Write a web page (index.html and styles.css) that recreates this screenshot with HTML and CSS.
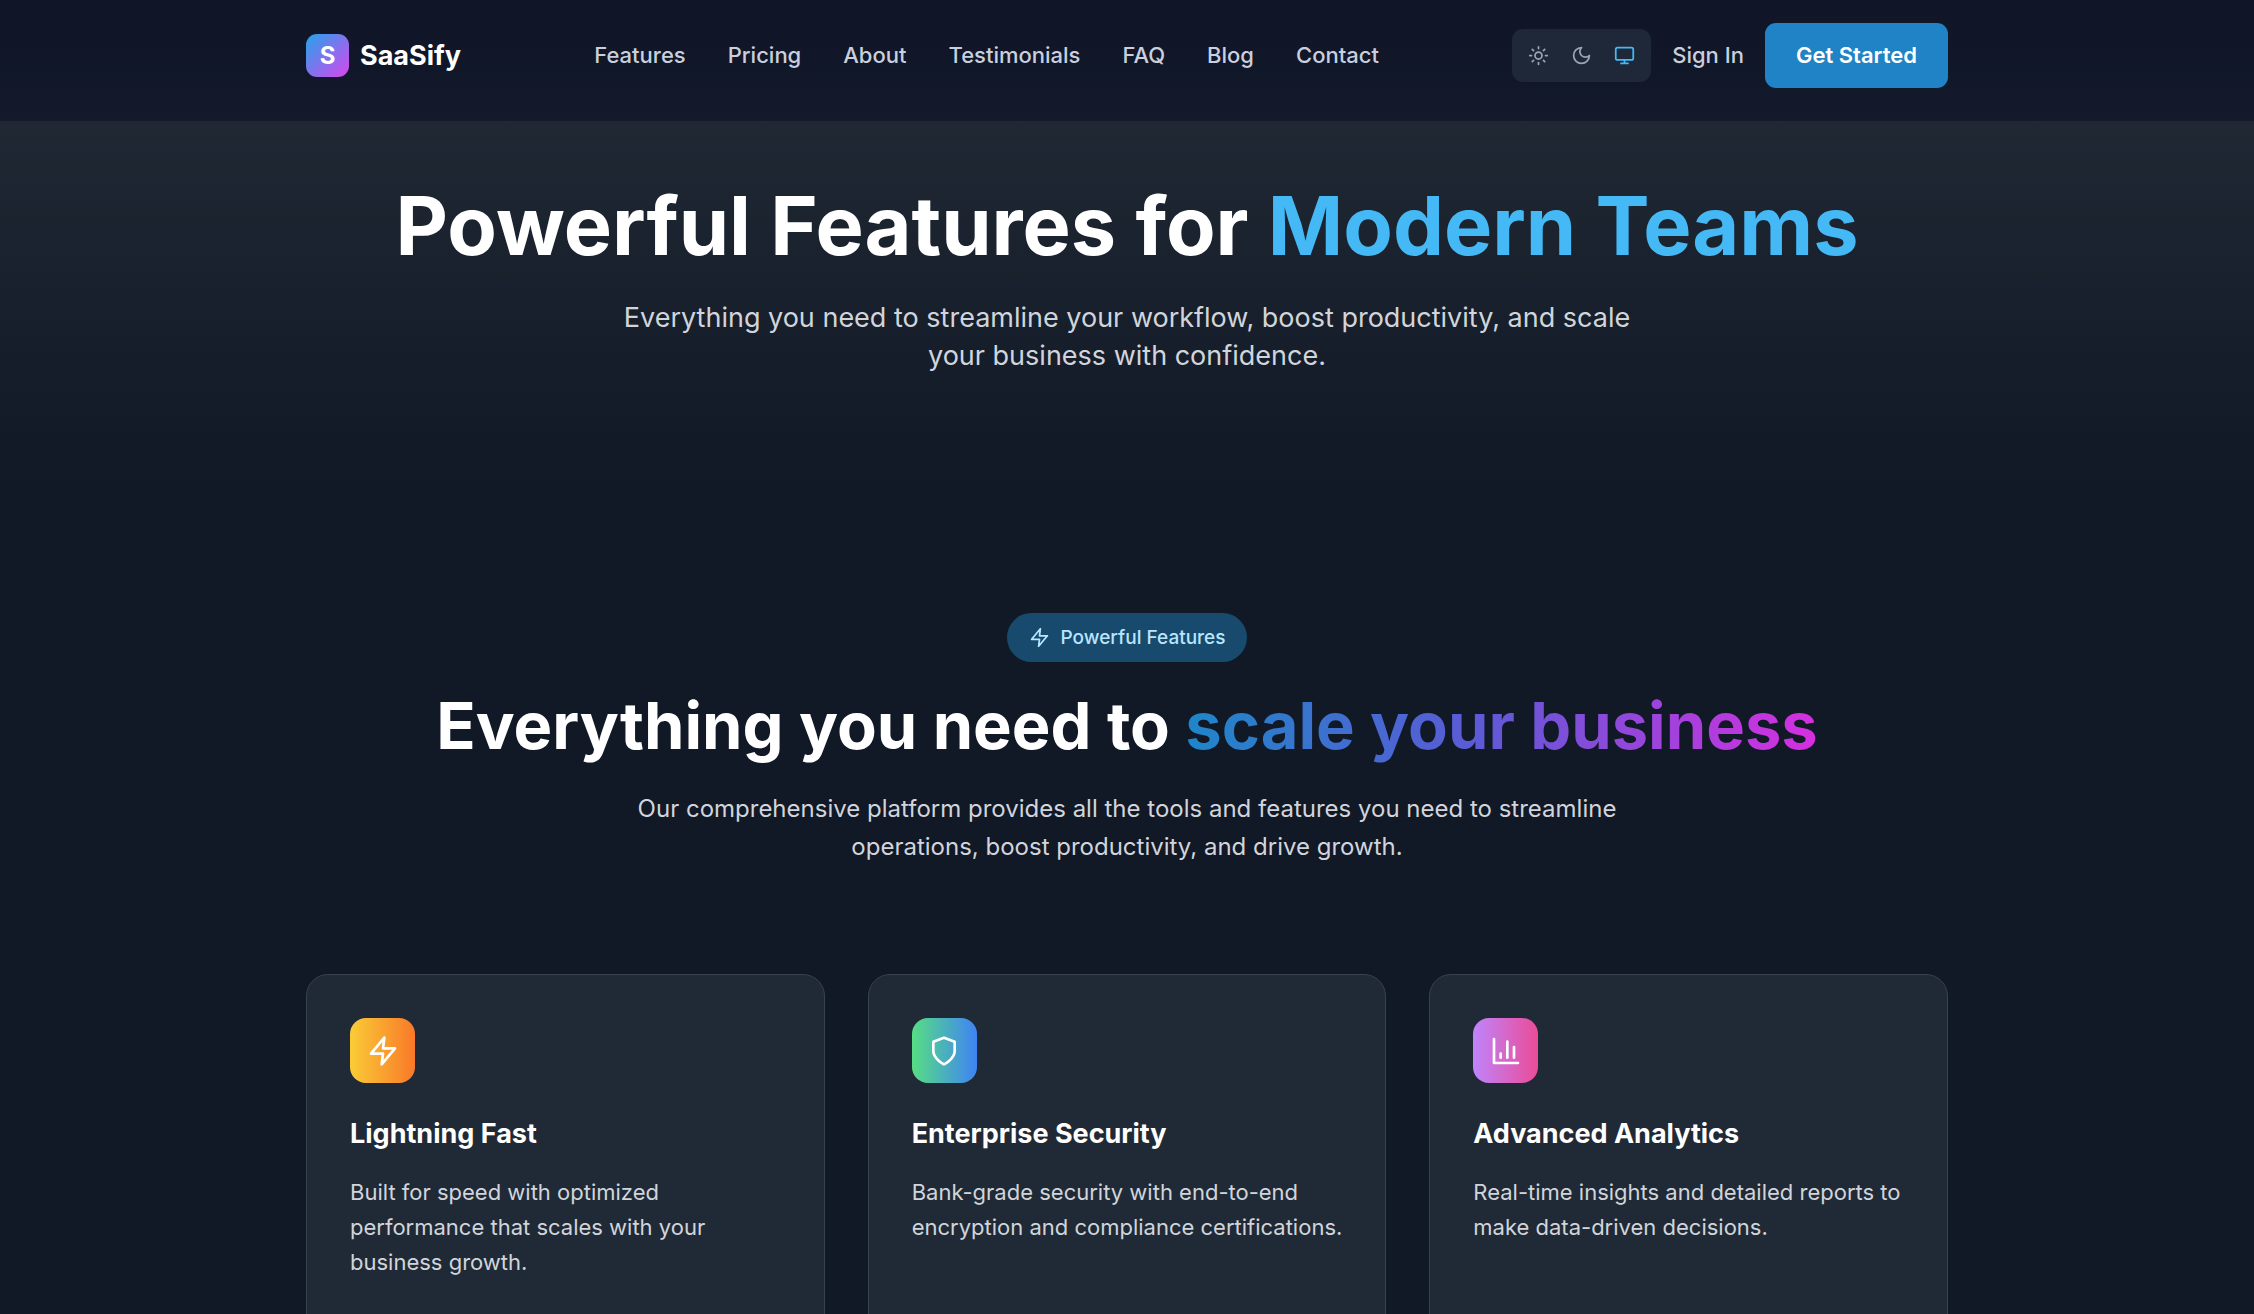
FILE: index.html
```html
<!DOCTYPE html>
<html lang="en">
<head>
<meta charset="utf-8">
<meta name="viewport" content="width=device-width, initial-scale=1">
<title>SaaSify – Features</title>
<link rel="stylesheet" href="styles.css">
</head>
<body>
<header class="site-header">
  <div class="container header-row">
    <a class="brand" href="#"><span class="brand-mark">S</span><span class="brand-name">SaaSify</span></a>
    <nav class="nav" aria-label="Main">
      <a href="#">Features</a>
      <a href="#">Pricing</a>
      <a href="#">About</a>
      <a href="#">Testimonials</a>
      <a href="#">FAQ</a>
      <a href="#">Blog</a>
      <a href="#">Contact</a>
    </nav>
    <div class="actions">
      <div class="theme-switch">
        <button type="button" aria-label="Light theme"><svg class="icon" viewBox="0 0 24 24"><circle cx="12" cy="12" r="4"/><path d="M12 2v2M12 20v2M4.93 4.93l1.41 1.41M17.66 17.66l1.41 1.41M2 12h2M20 12h2M6.34 17.66l-1.41 1.41M19.07 4.93l-1.41 1.41"/></svg></button>
        <button type="button" aria-label="Dark theme"><svg class="icon" viewBox="0 0 24 24"><path d="M12 3a6 6 0 0 0 9 9 9 9 0 1 1-9-9Z"/></svg></button>
        <button type="button" class="active" aria-label="System theme"><svg class="icon" viewBox="0 0 24 24"><rect width="20" height="14" x="2" y="3" rx="2"/><path d="M8 21h8M12 17v4"/></svg></button>
      </div>
      <a class="sign-in" href="#">Sign In</a>
      <button type="button" class="cta">Get Started</button>
    </div>
  </div>
</header>
<main>
  <section class="hero">
    <h1>Powerful Features for <span class="accent">Modern Teams</span></h1>
    <p>Everything you need to streamline your workflow, boost productivity, and scale your business with confidence.</p>
  </section>
  <section class="features">
    <div class="container">
      <div class="intro">
        <span class="pill"><svg class="icon" viewBox="0 0 24 24"><path d="M13 2 3 14h9l-1 8 10-12h-9l1-8z"/></svg>Powerful Features</span>
        <h2>Everything you need to <span class="gradient-text">scale your business</span></h2>
        <p>Our comprehensive platform provides all the tools and features you need to streamline operations, boost productivity, and drive growth.</p>
      </div>
      <div class="cards">
        <article class="card">
          <div class="tile tile-amber"><svg class="icon" viewBox="0 0 24 24"><path d="M13 2 3 14h9l-1 8 10-12h-9l1-8z"/></svg></div>
          <h3>Lightning Fast</h3>
          <p>Built for speed with optimized performance that scales with your business growth.</p>
        </article>
        <article class="card">
          <div class="tile tile-green"><svg class="icon" viewBox="0 0 24 24"><path d="M12 22s8-4 8-10V5l-8-3-8 3v7c0 6 8 10 8 10"/></svg></div>
          <h3>Enterprise Security</h3>
          <p>Bank-grade security with end-to-end encryption and compliance certifications.</p>
        </article>
        <article class="card">
          <div class="tile tile-pink"><svg class="icon" viewBox="0 0 24 24"><path d="M3 3v18h18M18 17V9M13 17V5M8 17v-3"/></svg></div>
          <h3>Advanced Analytics</h3>
          <p>Real-time insights and detailed reports to make data-driven decisions.</p>
        </article>
      </div>
    </div>
  </section>
</main>
</body>
</html>
```
FILE: styles.css
```css
* { box-sizing: border-box; }

body {
  margin: 0;
  background: #111826;
  color: #fff;
  font-family: Inter, "Liberation Sans", sans-serif;
  font-size: 22px;
  line-height: 33px;
}

h1, h2, h3, p { margin: 0; }
a { color: inherit; text-decoration: none; }
button {
  border: 0;
  padding: 0;
  background: none;
  color: inherit;
  font: inherit;
}

.icon {
  display: block;
  width: 21px;
  height: 21px;
  fill: none;
  stroke: currentColor;
  stroke-width: 2;
  stroke-linecap: round;
  stroke-linejoin: round;
}

.container {
  width: 100%;
  max-width: 1706px;
  margin: 0 auto;
  padding: 0 32px;
}

.site-header {
  padding: 23px 0 33px;
  background: linear-gradient(#101627, #101728 55%, #141a2b);
}
.header-row {
  display: flex;
  align-items: center;
  justify-content: space-between;
}
.brand {
  display: flex;
  align-items: center;
  gap: 11px;
}
.brand-mark {
  display: grid;
  place-items: center;
  width: 43px;
  height: 43px;
  border-radius: 11px;
  background: linear-gradient(135deg, #24a3eb, #d946ef);
  font-size: 24px;
  font-weight: 700;
}
.brand-name {
  font-size: 27px;
  font-weight: 700;
}
.nav {
  display: flex;
  gap: 42px;
  color: #c9cfde;
  font-weight: 500;
}
.actions {
  display: flex;
  align-items: center;
  gap: 21px;
}
.theme-switch {
  display: flex;
  padding: 5px;
  border-radius: 11px;
  background: #1f2838;
  color: #9ca3b4;
}
.theme-switch button { padding: 11px; }
.theme-switch .active { color: #45b9f5; }
.sign-in {
  color: #c9cfde;
  font-weight: 500;
}
.cta {
  padding: 16px 31px;
  border-radius: 11px;
  background: #2083c5;
  font-weight: 600;
}

.hero {
  padding: 65px 32px 108px;
  background: linear-gradient(#1f2833, #111826);
  text-align: center;
}
.hero h1 {
  font-size: 81px;
  line-height: 81px;
  font-weight: 700;
}
.accent { color: #45b9f5; }
.hero p {
  max-width: 1037px;
  margin: 32px auto 0;
  color: #d1d5db;
  font-size: 27px;
  line-height: 38px;
}

.features { padding: 130px 0; }
.intro {
  display: flex;
  flex-direction: column;
  align-items: center;
  text-align: center;
}
.pill {
  display: inline-flex;
  align-items: center;
  gap: 11px;
  padding: 11px 22px;
  border-radius: 25px;
  background: #174a6d;
  color: #b9e5fe;
  font-size: 19px;
  line-height: 27px;
  font-weight: 500;
}
.intro h2 {
  margin-top: 31px;
  font-size: 65px;
  line-height: 65px;
  font-weight: 700;
}
.gradient-text {
  background: linear-gradient(90deg, #1e86c9, #5b5bd6 45%, #d62fe0);
  background-clip: text;
  color: transparent;
}
.intro p {
  max-width: 1037px;
  margin-top: 32px;
  color: #d1d5db;
  font-size: 24px;
  line-height: 38px;
}

.cards {
  display: grid;
  grid-template-columns: repeat(3, 1fr);
  gap: 43px;
  margin-top: 108px;
}
.card {
  padding: 43px 43px 86px;
  border: 1px solid #374151;
  border-radius: 22px;
  background: #202a36;
}
.tile {
  display: grid;
  place-items: center;
  width: 65px;
  height: 65px;
  border-radius: 16px;
}
.tile .icon { width: 32px; height: 32px; }
.tile-amber { background: linear-gradient(90deg, #facc36, #f97929); }
.tile-green { background: linear-gradient(90deg, #56de83, #3f83f4); }
.tile-pink { background: linear-gradient(90deg, #c084fc, #ea4c98); }
.card h3 {
  margin-top: 32px;
  font-size: 27px;
  line-height: 38px;
  font-weight: 700;
}
.card p {
  margin-top: 22px;
  color: #d1d5db;
  font-size: 22px;
  line-height: 35px;
}
```
